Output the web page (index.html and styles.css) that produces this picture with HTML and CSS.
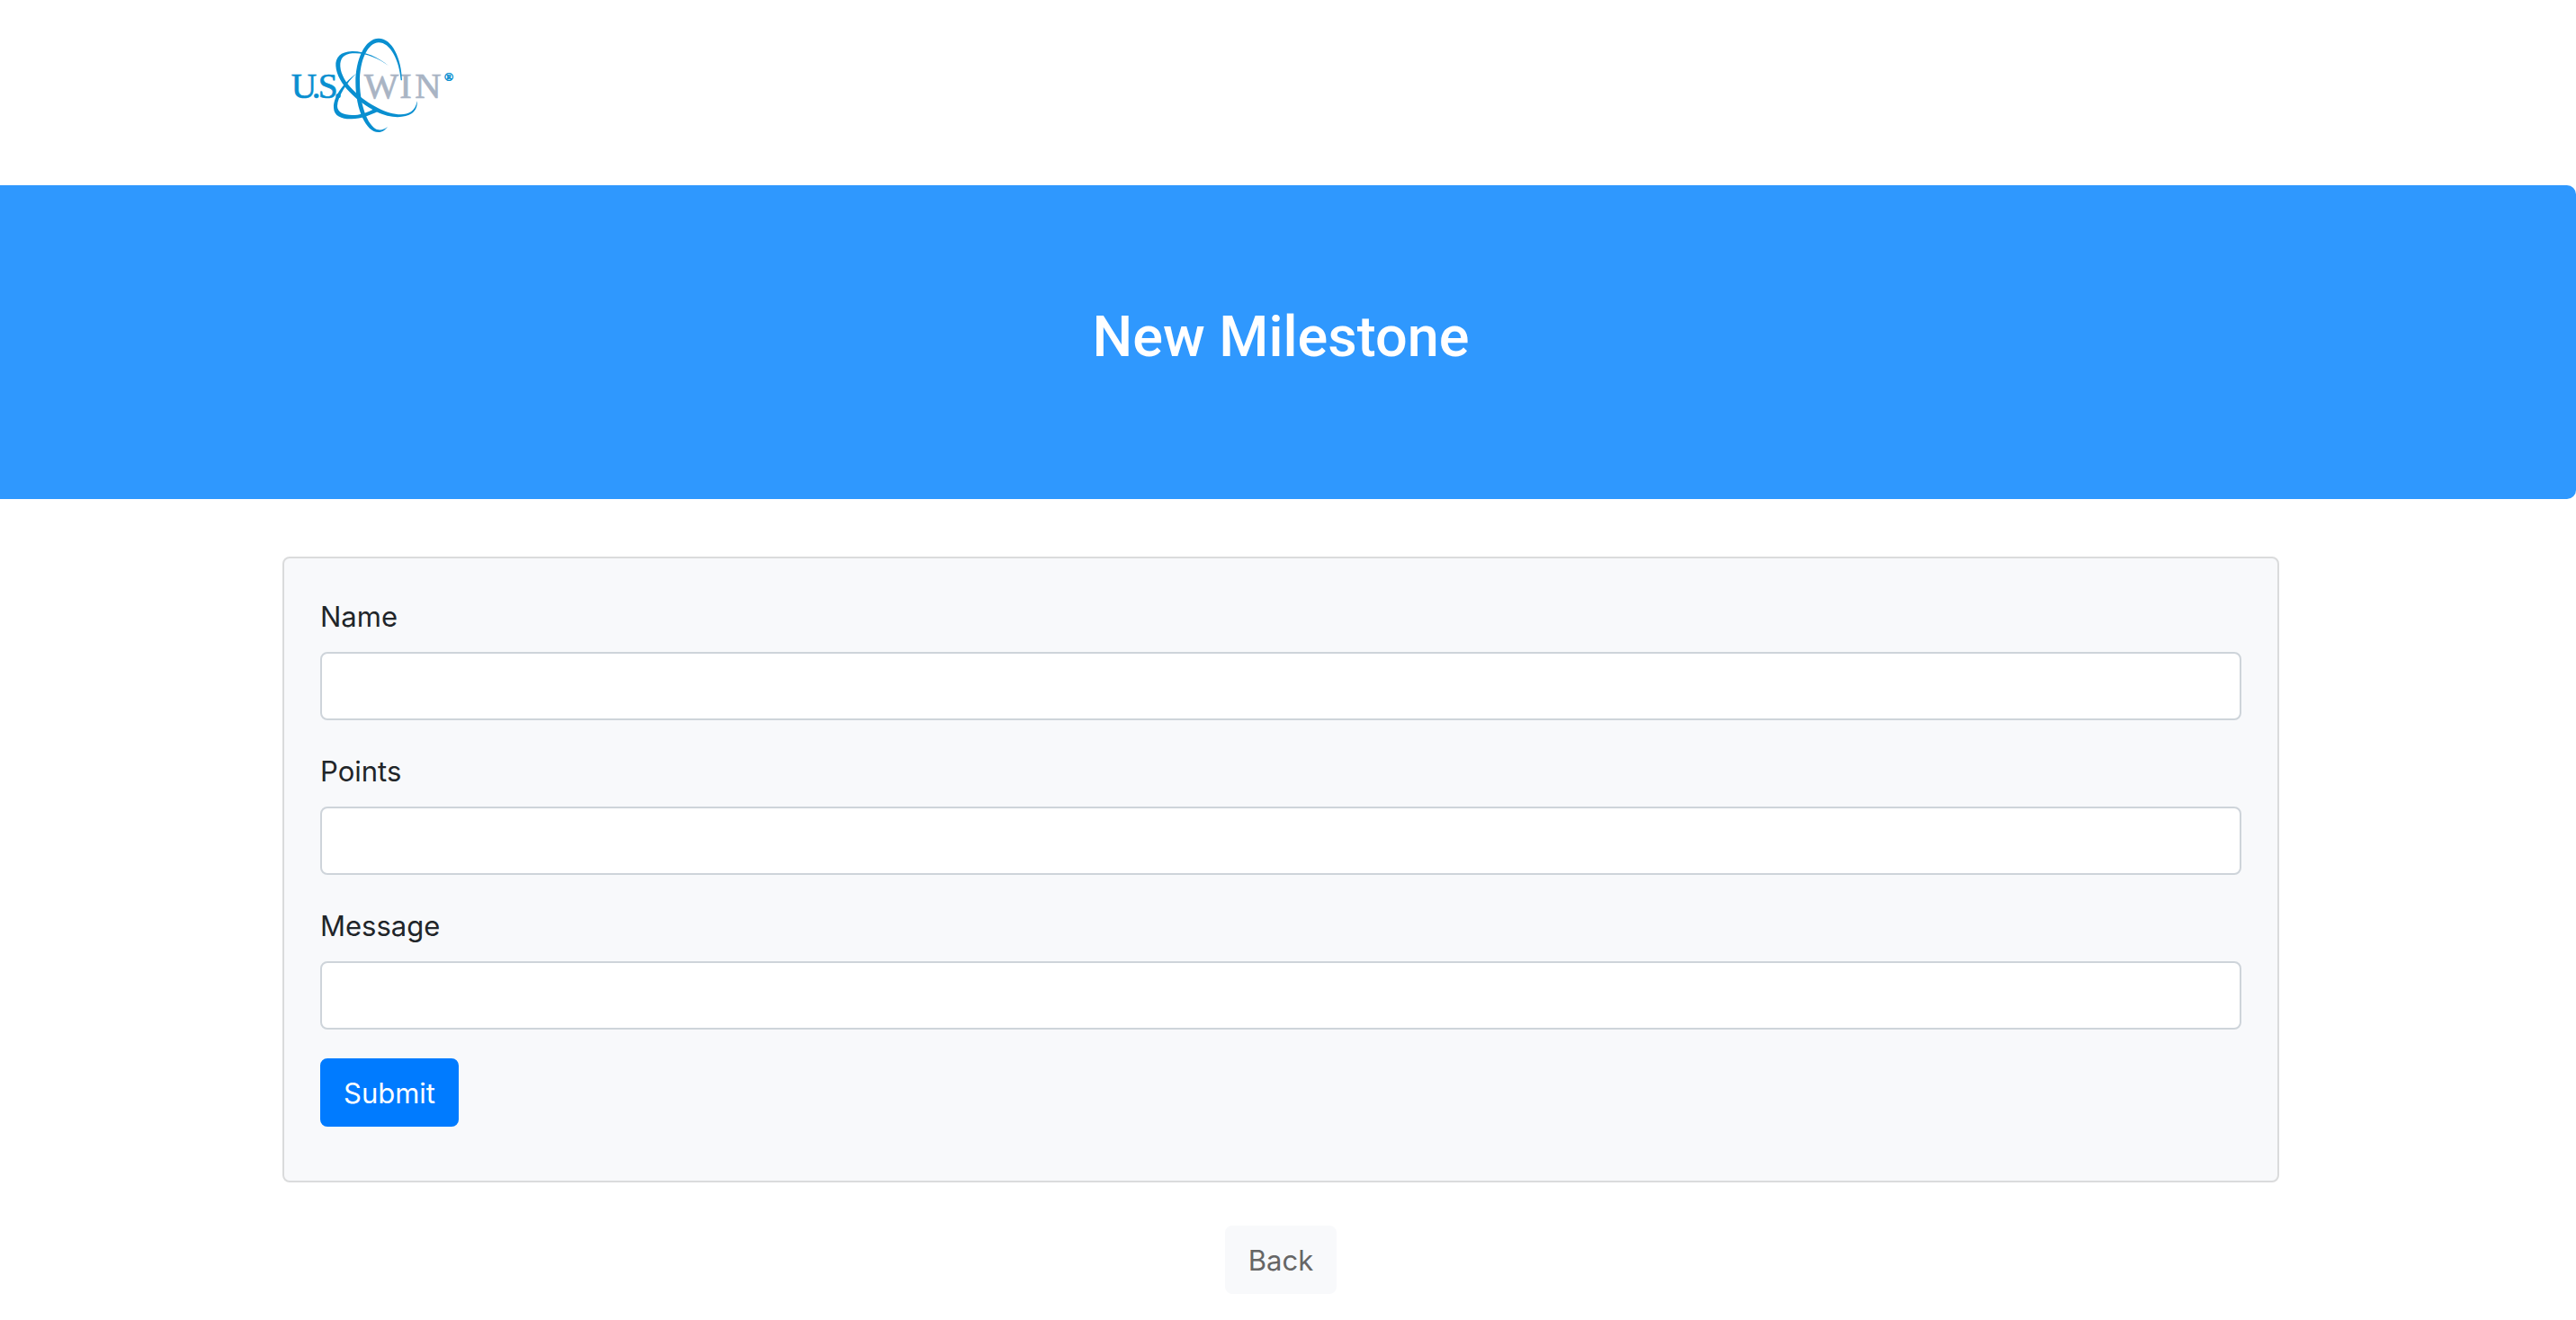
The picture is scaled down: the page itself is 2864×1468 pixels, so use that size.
FILE: index.html
```html
<!DOCTYPE html>
<html lang="en">
<head>
<meta charset="utf-8">
<meta name="viewport" content="width=device-width, initial-scale=1">
<title>New Milestone</title>
<link rel="stylesheet" href="styles.css">
</head>
<body>
<header class="container site-header">
  <svg class="logo" viewBox="0 0 630 390" role="img" aria-label="U.S. WIN">
    <text class="logo-gray" x="284 403 454" y="237" font-size="122">WIN</text>
    <text class="logo-blue" x="41 110 131 183" y="237" font-size="118">U.S.</text>
    <text class="logo-blue" x="552" y="180" font-size="40">®</text>
    <g class="logo-orbit">
      <path d="M411 178C409 105 378 38 333 38C286 38 256 110 256 185C256 275 292 351 332 351C346 351 356 343 363 332C353 341 343 345 333 343C302 339 271 270 270 185C269 112 297 52 333 52C371 52 402 110 407 178Z"/>
      <path d="M366 129C332 101 285 80 244 81C206 82 188 102 190 130C194 190 262 250 324 282C374 307 420 304 444 288C457 279 463 264 461 247C458 264 452 275 441 283C416 299 375 293 330 270C273 241 209 186 205 132C204 105 216 91 245 88C285 84 330 103 366 129Z"/>
      <path d="M258 156C224 180 181 228 183 270C184 299 212 308 243 307C275 306 303 296 334 280L320 272C293 287 269 294 245 294C215 294 195 284 195 264C196 232 228 184 258 156Z"/>
    </g>
  </svg>
</header>

<section class="banner">
  <h1 class="banner-title">New Milestone</h1>
</section>

<main class="container">
  <form class="card">
    <div class="field">
      <label class="field-label" for="name">Name</label>
      <input class="field-input" id="name" name="name" type="text">
    </div>
    <div class="field">
      <label class="field-label" for="points">Points</label>
      <input class="field-input" id="points" name="points" type="text">
    </div>
    <div class="field">
      <label class="field-label" for="message">Message</label>
      <input class="field-input" id="message" name="message" type="text">
    </div>
    <button class="btn btn-primary" type="submit">Submit</button>
  </form>
  <nav class="actions">
    <a class="btn btn-light" href="#">Back</a>
  </nav>
</main>
</body>
</html>
```
FILE: styles.css
```css
* {
  box-sizing: border-box;
}

body {
  margin: 0;
  padding-right: 16px;
  background: #fff;
  color: #212529;
  font-family: Inter, "Liberation Sans", sans-serif;
  font-size: 31px;
  line-height: 48px;
}

.container {
  max-width: 2280px;
  margin: 0 auto;
  padding: 0 30px;
}

.site-header {
  padding: 30px 26px 46px;
}

.logo {
  display: block;
  width: 210px;
  height: 130px;
  font-family: "Liberation Serif", serif;
}

.logo-blue,
.logo-orbit {
  fill: #098fd0;
}

.logo-gray {
  fill: #a9b4c4;
}

.logo-blue {
  stroke: #098fd0;
  stroke-width: 2px;
}

.logo-gray {
  stroke: #a9b4c4;
  stroke-width: 2px;
}

.banner {
  margin: 0 -16px 64px;
  padding: 130px 32px 142px;
  border-radius: 10px;
  background: #2f98fe;
  color: #fff;
  text-align: center;
}

.banner-title {
  margin: 0;
  font-family: Roboto, Inter, sans-serif;
  font-size: 63px;
  font-weight: 500;
  line-height: 77px;
}

.card {
  padding: 40px 40px 60px;
  border: 2px solid #dadbdc;
  border-radius: 8px;
  background: #f8f9fb;
}

.field {
  margin-bottom: 32px;
}

.field-label {
  display: block;
  margin-bottom: 14px;
  line-height: 50px;
}

.field-input {
  display: block;
  width: 100%;
  height: 76px;
  padding: 12px 24px;
  border: 2px solid #ced4da;
  border-radius: 8px;
  background: #fff;
  color: #495057;
  font: inherit;
}

.btn {
  display: inline-block;
  padding: 13px 24px 11px;
  border: 2px solid transparent;
  border-radius: 8px;
  font: inherit;
  text-decoration: none;
  cursor: pointer;
}

.btn-primary {
  display: block;
  border-color: #007bff;
  background: #007bff;
  color: #fff;
}

.btn-light {
  border-color: #f8f9fb;
  background: #f8f9fb;
  color: #666;
}

.actions {
  display: flex;
  justify-content: center;
  padding: 48px 0 28px;
}
```
